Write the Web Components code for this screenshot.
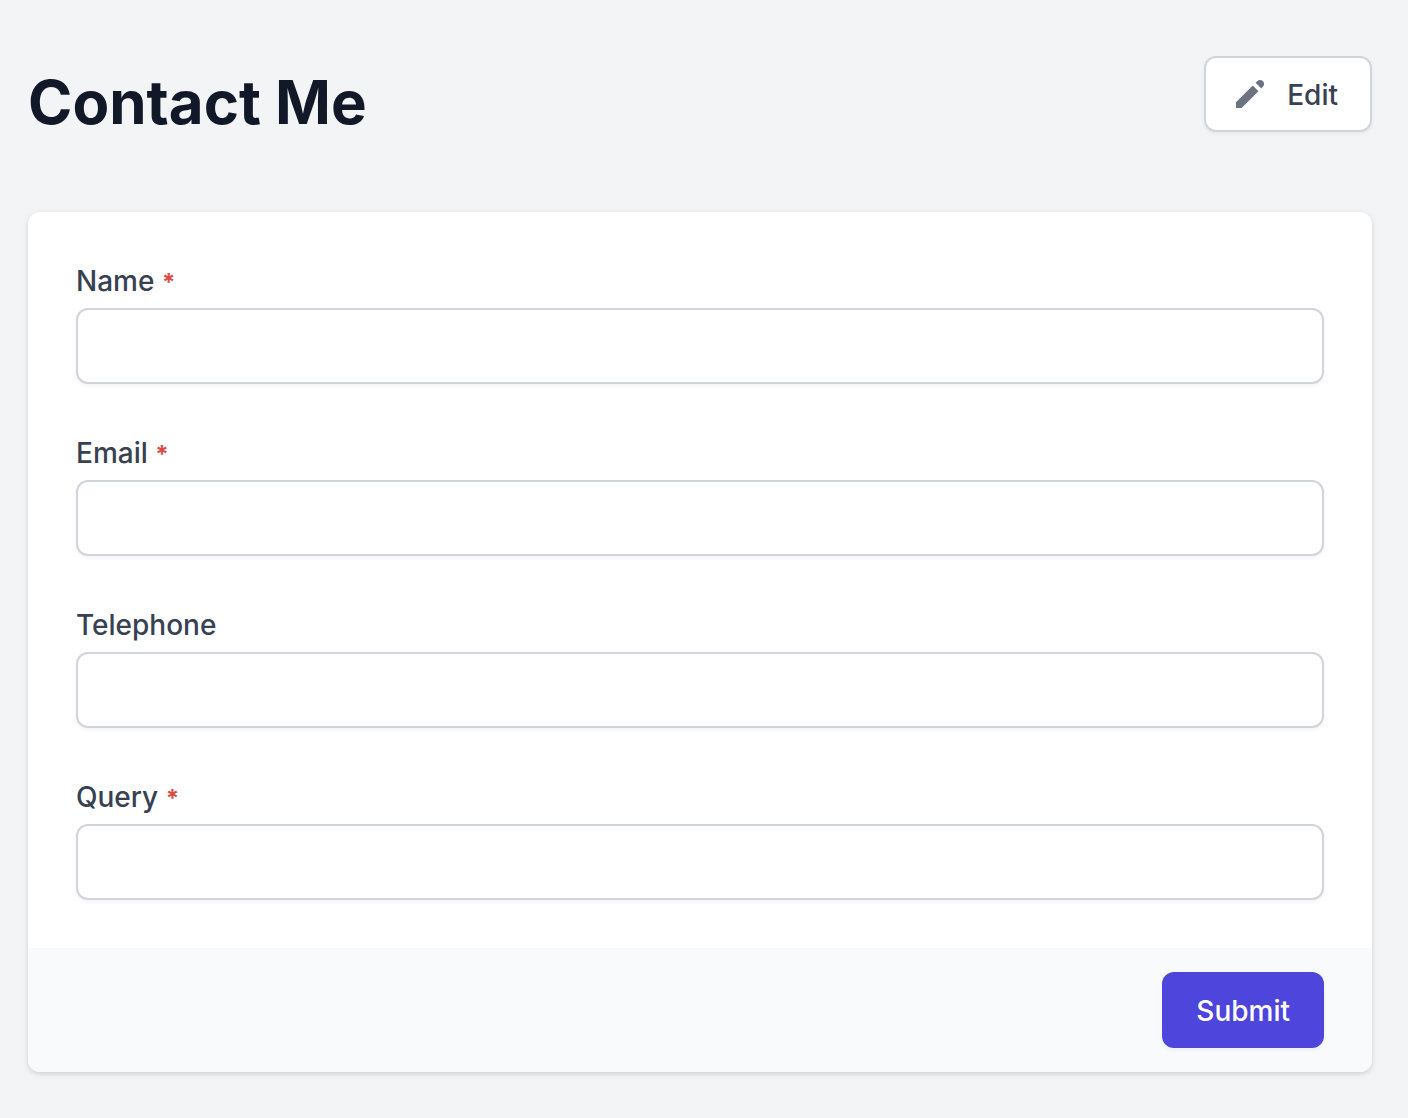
<!DOCTYPE html>
<html lang="en">
<head>
<meta charset="utf-8">
<title>Contact Me</title>
<style>
body { margin: 0; background: #f3f4f6; font-family: Inter, "Liberation Sans", sans-serif; color: #374151; }
</style>
</head>
<body>
<contact-page>
  <page-header slot="header" heading="Contact Me">Edit</page-header>
  <form-card>
    <form-field name="name" required>Name</form-field>
    <form-field name="email" type="email" required>Email</form-field>
    <form-field name="telephone" type="tel">Telephone</form-field>
    <form-field name="query" required>Query</form-field>
    <submit-button slot="footer">Submit</submit-button>
  </form-card>
</contact-page>
<script>
const define = (name, html, setup) => customElements.define(name, class extends HTMLElement {
  constructor() {
    super();
    this.attachShadow({ mode: 'open' }).innerHTML = html;
  }
  connectedCallback() {
    if (setup) setup(this, this.shadowRoot);
  }
});

define('contact-page', `
<style>
  :host { display: block; padding: 56px 36px 46px 28px; }
  main { display: flex; flex-direction: column; gap: 72px; }
</style>
<main><slot name="header"></slot><slot></slot></main>`);

define('page-header', `
<style>
  :host { display: flex; justify-content: space-between; align-items: flex-start; }
  h1 { margin: 0; padding-top: 8px; font-size: 60px; line-height: 76px; font-weight: 700; color: #111827; }
  button { display: flex; align-items: center; gap: 17px; box-sizing: border-box; height: 76px; padding: 0 32px 0 24px;
    border: 2px solid #d1d5db; border-radius: 12px; background: #fff; color: #374151;
    font: 500 28px/40px Inter, "Liberation Sans", sans-serif; box-shadow: 0 2px 4px rgba(0,0,0,.05); cursor: pointer; }
  svg { width: 40px; height: 40px; fill: #6b7280; }
  span { padding-top: 2px; }
</style>
<h1></h1>
<button type="button">
  <svg viewBox="0 0 20 20" aria-hidden="true"><path d="M13.586 3.586a2 2 0 112.828 2.828l-.793.793-2.828-2.828.793-.793zM11.379 5.793L3 14.172V17h2.828l8.38-8.379-2.83-2.828z"/></svg>
  <span><slot></slot></span>
</button>`, (el, root) => { root.querySelector('h1').textContent = el.getAttribute('heading'); });

define('form-card', `
<style>
  :host { display: block; }
  form { border-radius: 12px; overflow: hidden; background: #fff;
    box-shadow: 0 2px 6px rgba(0,0,0,.1), 0 2px 4px rgba(0,0,0,.06); }
  .fields { display: flex; flex-direction: column; gap: 48px; padding: 48px; }
  footer { display: flex; justify-content: flex-end; padding: 24px 48px; background: #f9fafb; }
</style>
<form novalidate><div class="fields"><slot></slot></div><footer><slot name="footer"></slot></footer></form>`,
(el, root) => { root.querySelector('form').addEventListener('submit', e => e.preventDefault()); });

define('form-field', `
<style>
  :host { display: flex; flex-direction: column; gap: 6px; }
  label { font-size: 28px; line-height: 42px; font-weight: 500; color: #374151; }
  .mark { color: #dc4a48; font-size: 24px; line-height: 24px; font-weight: 700; }
  input { box-sizing: border-box; width: 100%; height: 76px; margin: 0; padding: 16px 24px;
    border: 2px solid #d1d5db; border-radius: 12px; background: #fff; color: #111827;
    font: 400 28px/40px Inter, "Liberation Sans", sans-serif; box-shadow: 0 2px 4px rgba(0,0,0,.05); }
  input:focus { outline: 2px solid #4f46e5; outline-offset: -2px; }
</style>
<label for="control"><slot></slot></label>
<input id="control">`, (el, root) => {
  const input = root.querySelector('input');
  input.name = el.getAttribute('name');
  input.type = el.getAttribute('type') || 'text';
  input.required = el.hasAttribute('required');
  if (input.required && !root.querySelector('.mark')) {
    root.querySelector('label').insertAdjacentHTML('beforeend', ' <span class="mark">*</span>');
  }
});

define('submit-button', `
<style>
  :host { display: block; }
  button { box-sizing: border-box; height: 76px; padding: 2px 34px 0; border: 0; border-radius: 12px; background: #4e46dc; color: #fff;
    font: 500 28px/40px Inter, "Liberation Sans", sans-serif; box-shadow: 0 2px 4px rgba(0,0,0,.05); cursor: pointer; }
</style>
<button type="submit"><slot></slot></button>`);
</script>
</body>
</html>
